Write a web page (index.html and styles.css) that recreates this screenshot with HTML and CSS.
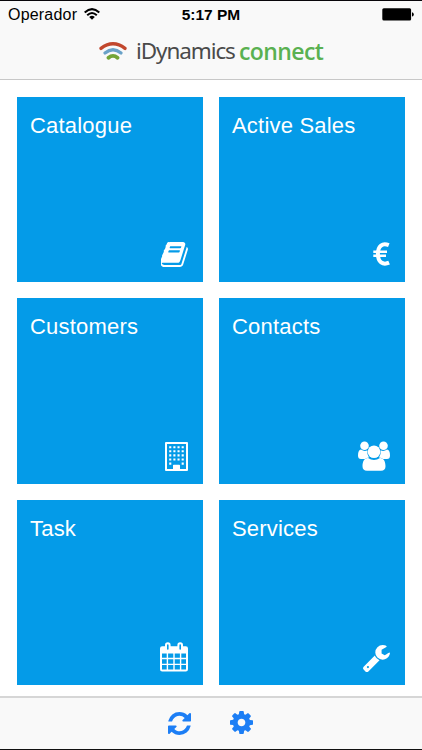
FILE: index.html
```html
<!DOCTYPE html>
<html lang="en">
<head>
    <meta charset="UTF-8">
    <meta name="viewport" content="width=device-width, initial-scale=1.0">
    <title>iDynamics connect</title>
    <link rel="stylesheet" href="styles.css">
</head>
<body>
    <div class="app">
        <header class="header">
            <!-- Status bar -->
            <div class="status">
                <div class="carrier">
                    <span>Operador</span>
                    <svg class="wifi" viewBox="0 0 16 12">
                        <g fill="none" stroke="#000" stroke-width="2">
                            <path d="M.7 4.500Q8-2.300 15.300 4.500"/>
                            <path d="M3.200 7.200Q8 2.700 12.800 7.200"/>
                        </g>
                        <path d="M5.200 8.900Q8 6.500 10.800 8.900L8 11.800z"/>
                    </svg>
                </div>
                <span class="time">5:17 PM</span>
                <svg class="battery" viewBox="0 0 32 13">
                    <rect x=".3" y=".3" width="28.8" height="12.2" rx="1.5"/>
                    <path d="M30 4.3q1.8 .4 1.8 2.1t-1.8 2.1z"/>
                </svg>
            </div>

            <!-- Logo -->
            <div class="brand">
                <svg class="logo" viewBox="0 0 28 18">
                    <g fill="none" stroke-linecap="round">
                        <path stroke="#c2472d" stroke-width="3.3" d="M2 6.400Q14-2.800 26 6.400"/>
                        <path stroke="#6aa2c8" stroke-width="3.3" d="M6 11Q14 4.400 22 11"/>
                        <path stroke="#74a536" stroke-width="3.8" d="M9.500 15.700Q14 12 18.500 15.700"/>
                    </g>
                </svg>
                <span class="brand-name">iDynamics</span>
                <span class="brand-product">connect</span>
            </div>
        </header>

        <main class="tiles">
            <div class="tile">
                <span class="tile-title">Catalogue</span>
                <svg class="icon icon-book" viewBox="60 128 1608 1536" preserveAspectRatio="none">
                    <path d="M1639 478q40 57 18 129l-275 906q-19 64-76.5 107.5t-122.5 43.5h-923q-77 0-148.5-53.5t-99.5-131.5q-24-67-2-127 0-4 3-27t4-37q1-8-3-21.5t-3-19.5q2-11 8-21t16.5-23.5 16.5-23.5q23-38 45-91.5t30-91.5q3-10 .5-30t-.5-28q3-11 17-28t17-23q21-36 42-92t25-90q1-9-2.5-32t.5-28q4-13 22-30.5t22-22.5q19-26 42.5-84.5t27.5-96.5q1-8-3-25.5t-2-26.5q2-8 9-18t18-23 17-21q8-12 16.5-30.5t15-35 16-36 19.5-32 26.5-23.5 36-11.5 47.5 5.5l-1 3q38-9 51-9h761q74 0 114 56t18 130l-274 906q-36 119-71.5 153.5t-128.5 34.5h-869q-27 0-38 15-11 16-1 43 24 70 144 70h923q29 0 56-15.5t35-41.5l300-987q7-22 5-57 38 15 59 43zm-1064 2q-4 13 2 22.5t20 9.5h608q13 0 25.5-9.5t16.5-22.5l21-64q4-13-2-22.5t-20-9.5h-608q-13 0-25.5 9.5t-16.5 22.5zm-83 256q-4 13 2 22.5t20 9.5h608q13 0 25.5-9.5t16.5-22.5l21-64q4-13-2-22.5t-20-9.5h-608q-13 0-25.5 9.5t-16.5 22.5z"/>
                </svg>
            </div>
            <div class="tile">
                <span class="tile-title">Active Sales</span>
                <svg class="icon icon-euro" viewBox="0 0 17 24">
                    <g fill="none" stroke="#fff">
                        <path stroke-width="4" d="M15.800 3.200C9.500 .6 4.900 3.800 4.900 12s4.900 11.400 11.200 8.700"/>
                        <path stroke-width="2.500" d="M.3 9.700H14M.3 13.800H13"/>
                    </g>
                </svg>
            </div>
            <div class="tile">
                <span class="tile-title">Customers</span>
                <svg class="icon icon-building" viewBox="0 0 23 29">
                    <path fill-rule="evenodd" d="M1 0H22Q23 0 23 1V28Q23 29 22 29H1Q0 29 0 28V1Q0 0 1 0zM2 2V27H8V23.500Q8 22.800 8.700 22.800H14.300Q15 22.800 15 23.500V27H21V2z"/>
                    <path fill="none" stroke="#fff" stroke-width="2.100" stroke-dasharray="2.100 2.050" d="M4.200 5.200H19M4.200 9.300H19M4.200 13.400H19M4.200 17.500H19M4.200 21.600H6.300M16.650 21.600H18.750"/>
                </svg>
            </div>
            <div class="tile">
                <span class="tile-title">Contacts</span>
                <svg class="icon icon-users" viewBox="0 0 32 30">
                    <circle cx="6.500" cy="4.700" r="4.300"/>
                    <circle cx="25.500" cy="4.700" r="4.300"/>
                    <path d="M3 8.500Q6.300 11 9.400 9.300Q8.700 13.500 11 16.500Q8.500 16.600 7 18H3Q0 18 0 14.500Q0 9 3 8.500zM29 8.500Q25.700 11 22.600 9.300Q23.300 13.500 21 16.500Q23.500 16.600 25 18H29Q32 18 32 14.500Q32 9 29 8.500z"/>
                    <circle cx="16" cy="10.800" r="6.300"/>
                    <path d="M10 16.900Q16 21.200 22 16.900C26 16.900 27.500 21 27.500 25.300Q27.500 29.700 23 29.700H9Q4.500 29.700 4.500 25.300C4.500 21 6 16.900 10 16.900z"/>
                </svg>
            </div>
            <div class="tile">
                <span class="tile-title">Task</span>
                <svg class="icon icon-calendar" viewBox="0 0 28 30">
                    <path fill-rule="evenodd" d="M2.200 4.200H5V3Q5 .3 7.800 .3T10.600 3V4.200H17.400V3Q17.400 .3 20.200 .3T23 3V4.200H25.800Q28 4.200 28 6.400V27.300Q28 29.500 25.800 29.500H2.200Q0 29.500 0 27.300V6.400Q0 4.200 2.200 4.200zM7 3V7Q7 7.800 7.800 7.800T8.600 7V3Q8.600 2.200 7.800 2.200T7 3zM19.400 3V7Q19.400 7.800 20.200 7.800T21 7V3Q21 2.200 20.200 2.200T19.400 3zM2 11.500V15.800H6.700V11.500zM8.100 11.500V15.800H13.300V11.500zM14.700 11.500V15.800H19.900V11.500zM21.300 11.500V15.800H26V11.500zM2 17.200V21.700H6.700V17.200zM8.100 17.200V21.700H13.300V17.200zM14.700 17.200V21.700H19.900V17.200zM21.300 17.200V21.700H26V17.200zM2 23.100V27.500H6.700V23.100zM8.100 23.100V27.500H13.300V23.100zM14.700 23.100V27.500H19.900V23.100zM21.300 23.100V27.500H26V23.100z"/>
                </svg>
            </div>
            <div class="tile">
                <span class="tile-title">Services</span>
                <svg class="icon icon-wrench" viewBox="84 126 1644 1646">
                    <path d="M448 1472q0-26-19-45t-45-19-45 19-19 45 19 45 45 19 45-19 19-45zm644-420l-682 682q-37 37-90 37-52 0-91-37l-106-108q-38-36-38-90 0-53 38-91l681-681q39 98 114.500 173.500t173.500 114.500zm634-435q0 39-23 106-47 134-164.500 217.500t-258.500 83.500q-185 0-316.500-131.500t-131.500-316.500 131.500-316.500 316.500-131.500q58 0 121.500 16.500t107.500 46.500q16 11 16 28t-16 28l-293 169v224l193 107q5-3 79-48.500t135.500-81 70.500-35.500q15 0 23.500 10t8.500 25z"/>
                </svg>
            </div>
        </main>

        <!-- Bottom toolbar -->
        <footer class="toolbar">
            <svg class="tool" viewBox="128 128 1536 1536">
                <path d="M1639 1056q0 5-1 7-64 268-268 434.500t-478 166.500q-146 0-282.500-55t-243.500-157l-129 129q-19 19-45 19t-45-19-19-45v-448q0-26 19-45t45-19h448q26 0 45 19t19 45-19 45l-137 137q71 66 161 102t187 36q134 0 250-65t186-179q11-17 53-117 8-23 30-23h192q13 0 22.500 9.500t9.500 22.500zm25-800v448q0 26-19 45t-45 19h-448q-26 0-45-19t-19-45 19-45l138-138q-148-137-349-137-134 0-250 65t-186 179q-11 17-53 117-8 23-30 23h-199q-13 0-22.500-9.500t-9.500-22.500v-7q65-268 270-434.500t480-166.500q146 0 284 55.500t245 156.500l130-129q19-19 45-19t45 19 19 45z"/>
            </svg>
            <svg class="tool tool-settings" viewBox="128 128 1536 1536">
                <path d="M1152 896q0-106-75-181t-181-75-181 75-75 181 75 181 181 75 181-75 75-181zm512-109v222q0 12-8 23t-20 13l-185 28q-19 54-39 91 35 50 107 138 10 12 10 25t-9 23q-27 37-99 108t-94 71q-12 0-26-9l-138-108q-44 23-91 38-16 136-29 186-7 28-36 28h-222q-14 0-24.500-8.500t-11.500-21.500l-28-184q-49-16-90-37l-141 107q-10 9-25 9-14 0-25-11-126-114-165-168-7-10-7-23 0-12 8-23 15-21 51-66.500t54-70.500q-27-50-41-99l-183-27q-13-2-21-12.500t-8-23.500v-222q0-12 8-23t19-13l186-28q14-46 39-92-40-57-107-138-10-12-10-24 0-10 9-23 26-36 98.500-107.500t94.500-71.500q13 0 26 10l138 107q44-23 91-38 16-136 29-186 7-28 36-28h222q14 0 24.500 8.500t11.500 21.500l28 184q49 16 90 37l142-107q9-9 24-9 13 0 25 10 129 119 165 170 7 8 7 22 0 12-8 23-15 21-51 66.500t-54 70.500q26 50 41 98l183 28q13 2 21 12.500t8 23.500z"/>
            </svg>
        </footer>
    </div>
</body>
</html>
```
FILE: styles.css
```css
body {
    margin: 0;
    font-family: "Liberation Sans", Arial, sans-serif;
    background-color: #fff;
    color: #000;
}

.app {
    display: flex;
    flex-direction: column;
    box-sizing: border-box;
    height: 750px;
    border-top: 1px solid #08060a;
    border-bottom: 1px solid #111;
}

.header {
    box-sizing: border-box;
    height: 79px;
    background-color: #f9f9f9;
    border-bottom: 1px solid #c8c8c8;
}

/* Status bar */
.status {
    display: grid;
    grid-template-columns: 1fr auto 1fr;
    align-items: center;
    height: 27px;
    padding: 0 8px;
    font-size: 16px;
}

.carrier {
    display: flex;
    align-items: center;
    gap: 7px;
    letter-spacing: 0.2px;
}

.wifi {
    width: 16px;
    height: 12px;
    margin-top: -1px;
}

.time {
    font-weight: bold;
    font-size: 15.5px;
}

.battery {
    justify-self: end;
    width: 32px;
    height: 13px;
}

/* Logo */
.brand {
    display: flex;
    align-items: center;
    height: 46px;
    padding-left: 98.5px;
    font-size: 23px;
    line-height: 46px;
}

.logo {
    width: 28px;
    height: 18px;
    margin-right: 9.5px;
}

.brand-name {
    width: 103px;
    font-family: "Noto Sans", sans-serif;
    font-size: 22.5px;
    font-weight: 400;
    letter-spacing: -1.1px;
    color: #4a4a4a;
}

.brand-product {
    font-family: "Open Sans", sans-serif;
    font-weight: 600;
    letter-spacing: -0.6px;
    color: #5ab152;
}

/* Tiles */
.tiles {
    flex: 1;
    display: grid;
    grid-template-columns: 186px 186px;
    grid-auto-rows: 185.5px;
    gap: 16px;
    align-content: start;
    padding: 16.5px 17px 0;
}

.tile {
    display: flex;
    flex-direction: column;
    justify-content: space-between;
    align-items: flex-end;
    box-sizing: border-box;
    padding: 16px 15.5px 13px 13px;
    background-color: #049be8;
    color: #fff;
}

.tile-title {
    align-self: flex-start;
    font-size: 22px;
    line-height: 26px;
    letter-spacing: 0.2px;
}

.icon {
    display: block;
    fill: #fff;
}

.icon-book {
    width: 27px;
    height: 25px;
    margin-bottom: 2px;
}

.icon-euro {
    width: 17px;
    height: 24px;
    margin-bottom: 3px;
}

.icon-building {
    width: 23px;
    height: 29px;
}

.icon-users {
    width: 32px;
    height: 30px;
}

.icon-calendar {
    width: 28px;
    height: 30px;
}

.icon-wrench {
    width: 27px;
    height: 27px;
}

/* Toolbar */
.toolbar {
    display: flex;
    gap: 39px;
    box-sizing: border-box;
    height: 53px;
    padding: 14px 0 0 168px;
    background-color: #f9f9f9;
    border-top: 2px solid #d6d6d6;
}

.tool {
    width: 23px;
    height: 23px;
    fill: #1c7ef5;
}

.tool-settings {
    margin-top: -1px;
}
```
